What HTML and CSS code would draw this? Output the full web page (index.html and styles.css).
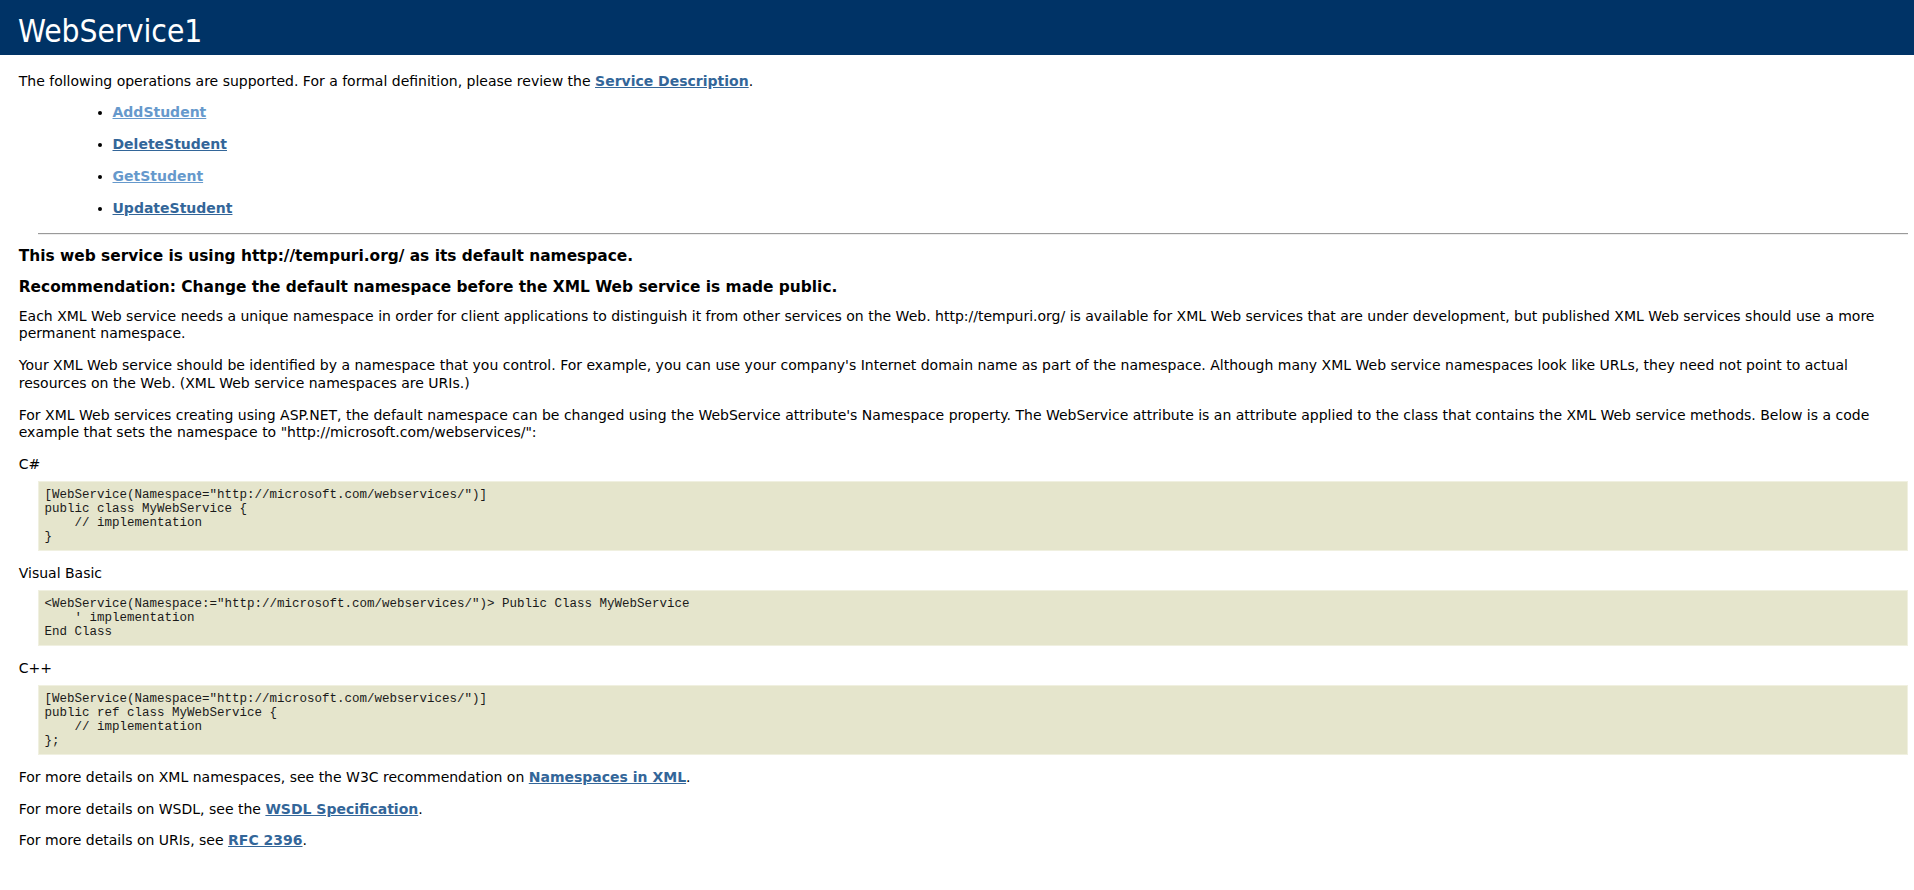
FILE: index.html
```html
<!DOCTYPE html>
<html>
<head>
<meta charset="utf-8">
<title>WebService1 Web Service</title>
<link rel="stylesheet" href="styles.css">
</head>
<body>
<div class="heading1">WebService1</div>
<div class="content">
  <br>
  <p class="intro">The following operations are supported. For a formal definition, please review the <a href="#">Service Description</a>.</p>
  <ul class="ops">
    <li><a class="visited" href="#">AddStudent</a></li>
    <li><a href="#">DeleteStudent</a></li>
    <li><a class="visited" href="#">GetStudent</a></li>
    <li><a href="#">UpdateStudent</a></li>
  </ul>
  <hr class="rule">
  <h3 class="note">This web service is using http://tempuri.org/ as its default namespace.</h3>
  <h3 class="note">Recommendation: Change the default namespace before the XML Web service is made public.</h3>
  <p class="intro">Each XML Web service needs a unique namespace in order for client applications to distinguish it from other services on the Web. http://tempuri.org/ is available for XML Web services that are under development, but published XML Web services should use a more permanent namespace.</p>
  <p class="intro">Your XML Web service should be identified by a namespace that you control. For example, you can use your company's Internet domain name as part of the namespace. Although many XML Web service namespaces look like URLs, they need not point to actual resources on the Web. (XML Web service namespaces are URIs.)</p>
  <p class="intro">For XML Web services creating using ASP.NET, the default namespace can be changed using the WebService attribute's Namespace property. The WebService attribute is an attribute applied to the class that contains the XML Web service methods. Below is a code example that sets the namespace to "http://microsoft.com/webservices/":</p>
  <p class="intro">C#</p>
  <pre class="code">[WebService(Namespace="http://microsoft.com/webservices/")]
public class MyWebService {
    // implementation
}</pre>
  <p class="intro">Visual Basic</p>
  <pre class="code">&lt;WebService(Namespace:="http://microsoft.com/webservices/")&gt; Public Class MyWebService
    ' implementation
End Class</pre>
  <p class="intro">C++</p>
  <pre class="code">[WebService(Namespace="http://microsoft.com/webservices/")]
public ref class MyWebService {
    // implementation
};</pre>
  <p class="intro">For more details on XML namespaces, see the W3C recommendation on <a href="#">Namespaces in XML</a>.</p>
  <p class="intro">For more details on WSDL, see the <a href="#">WSDL Specification</a>.</p>
  <p class="intro">For more details on URIs, see <a href="#">RFC 2396</a>.</p>
</div>
</body>
</html>
```
FILE: styles.css
```css
html, body {
  margin: 0;
  padding: 0;
  background: #ffffff;
  color: #000000;
  font-family: "DejaVu Sans", sans-serif;
}

.heading1 {
  background-color: #003366;
  color: #ffffff;
  font-family: "DejaVu Sans Condensed", "DejaVu Sans", sans-serif;
  font-size: 31.5px;
  font-weight: normal;
  line-height: 39px;
  padding: 12px 0 4px 18px;
}

.content {
  margin-left: 37.5px;
  margin-right: 6px;
  font-size: 14px;
  line-height: 17.5px;
  padding-bottom: 28px;
}

.content a {
  color: #336699;
  font-weight: bold;
  text-decoration: underline;
}

.content a.visited {
  color: #6699cc;
}

.intro {
  margin: 0 0 14.3px -18.75px;
}

.ops {
  margin: 0 0 0 25px;
  padding-left: 50px;
}

.ops li {
  margin-top: 14.4px;
}

.rule {
  margin: 15px 0 0 0;
  border: 0;
  border-top: 1px solid #9a9a9a;
  border-bottom: 1px solid #eeeeee;
  height: 0;
}

.note {
  font-size: 15.4px;
  line-height: 18.7px;
  font-weight: bold;
  margin: 12.5px 0 11px -18.75px;
}

.code {
  background-color: #e5e5cc;
  border: 1px solid #f0f0e0;
  padding: 5.8px 6px;
  color: #1a1a1a;
  font-family: "Liberation Mono", "Courier New", monospace;
  font-size: 12.5px;
  line-height: 14.2px;
  margin: -6.7px 0 13.5px 0;
}
```
